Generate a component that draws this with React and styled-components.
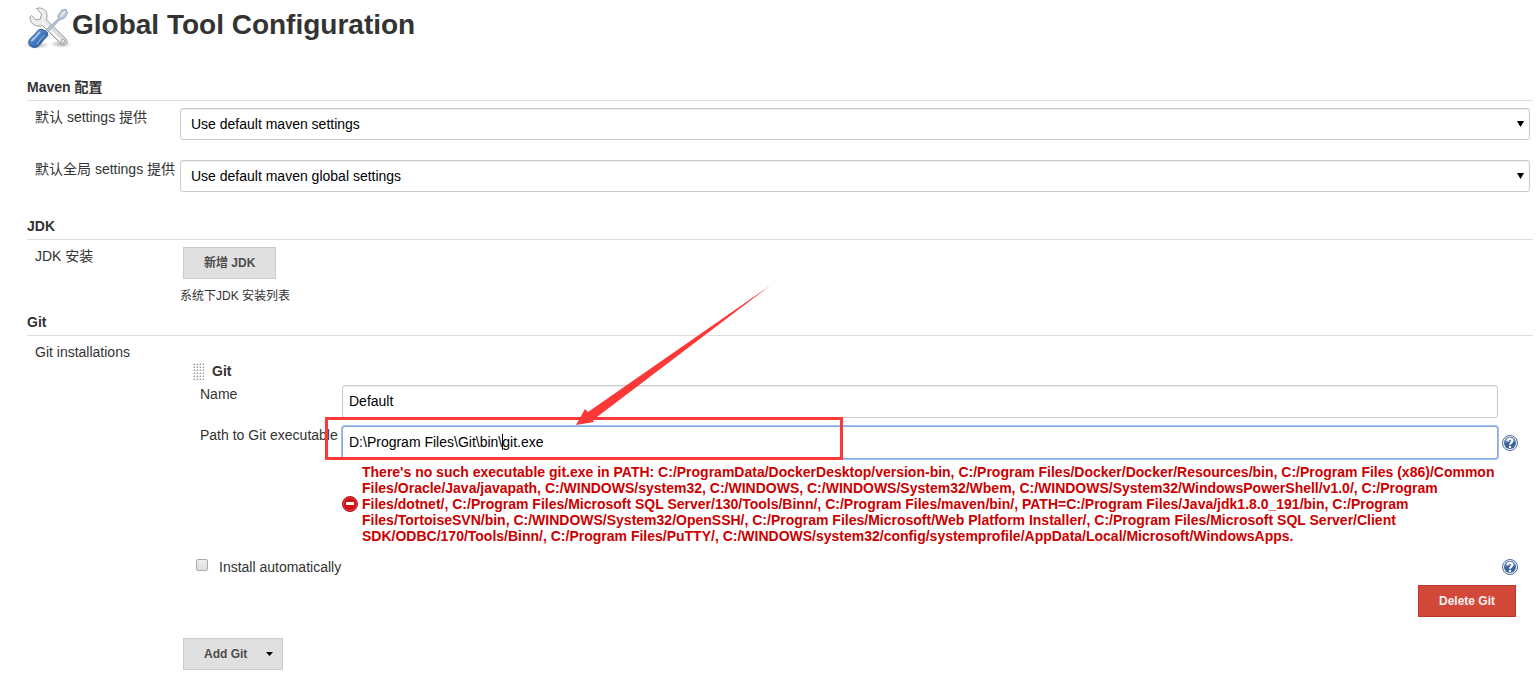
import React, { useState } from "react";
import styled, { createGlobalStyle } from "styled-components";

const GlobalStyle = createGlobalStyle`
    * {
        box-sizing: border-box;
    }

    body {
        margin: 0;
        background-color: white;
        color: #333;
        font-family: "Liberation Sans", "Noto Sans CJK SC", sans-serif;
        font-size: 14px;
        line-height: 18px;
    }

    input, select, button {
        font-family: inherit;
    }
`;

const Page = styled.main`
    padding: 0 3px 4px 24px;
`;

const Header = styled.header`
    display: flex;
    align-items: flex-start;
    padding-top: 4px;
    height: 73px;

    h1 {
        margin: 0;
        font-size: 28px;
        line-height: 42px;
    }

    svg {
        width: 48px;
        height: 48px;
        flex: none;
    }
`;

const Section = styled.section`
    margin-left: 3px;

    h2 {
        margin: 0;
        padding: 5px 0 4px;
        border-bottom: 1px solid #ddd;
        font-size: 14px;
        line-height: 18px;
    }
`;

const Row = styled.div`
    display: grid;
    grid-template-columns: 153px 1fr;
    padding-bottom: ${props => props.$space}px;
`;

const RowLabel = styled.label`
    padding: 7px 0 0 8px;
    white-space: nowrap;
`;

const RowBody = styled.div`
    padding: 7px 3px 0 0;
    min-width: 0;
`;

const SelectBox = styled.div`
    position: relative;

    select {
        display: block;
        width: 100%;
        height: 32px;
        padding: 0 24px 0 10px;
        appearance: none;
        border: 1px solid #ccc;
        border-radius: 3px;
        background-color: white;
        box-shadow: inset 0 1px 1px rgba(0, 0, 0, 0.08);
        color: black;
        font-size: 14px;
    }

    svg {
        position: absolute;
        right: 6px;
        top: 13px;
        pointer-events: none;
    }
`;

const Button = styled.button`
    display: inline-flex;
    align-items: center;
    height: 32px;
    margin: 0 3px;
    padding: 0 ${props => props.$menu ? 9 : 20}px 0 20px;
    gap: 19px;
    border: 1px solid ${props => props.$danger ? '#b8392b' : '#ccc'};
    background-color: ${props => props.$danger ? '#d24939' : '#e0e0e0'};
    color: ${props => props.$danger ? '#f2f2f2' : '#4d4d4d'};
    font-size: 12px;
    font-weight: bold;
    line-height: 14px;
    cursor: pointer;
`;

const Note = styled.div`
    padding: 8px 0 3px;
    font-size: 12px;
`;

const Installation = styled.div`
    padding: 19px 12px 21px 13px;
`;

const InstallHead = styled.div`
    display: flex;
    align-items: center;
    gap: 8px;
    height: 18px;
    font-weight: bold;
`;

const Field = styled.div`
    display: grid;
    grid-template-columns: 149px 1fr 20px;
    padding-bottom: 8px;

    label {
        padding-left: 7px;
        white-space: nowrap;
    }
`;

const Fields = styled.div`
    padding-top: 5px;
`;

const Control = styled.div`
    position: relative;
    min-width: 0;

    input {
        display: block;
        width: 100%;
        height: 33px;
        padding: 0 6px 2px;
        border: 1px solid #ccc;
        border-radius: 3px;
        background-color: white;
        box-shadow: inset 0 1px 1px rgba(0, 0, 0, 0.08);
        color: black;
        font-size: 14px;
        outline: none;
    }

    input.active {
        border-color: #86a9e8;
        box-shadow: 0 0 0 1px #a4c0f0;
    }
`;

const Caret = styled.span`
    position: absolute;
    left: 160px;
    top: 8px;
    width: 1px;
    height: 16px;
    background-color: black;
`;

const Highlight = styled.div`
    position: absolute;
    left: -17px;
    top: -9px;
    width: 518px;
    height: 43px;
    border: 3px solid #fd3838;
    pointer-events: none;
`;

const Arrow = styled.svg`
    position: absolute;
    left: 234px;
    top: -142px;
    pointer-events: none;
`;

const HelpButton = styled.button`
    display: flex;
    align-self: center;
    margin-left: 4px;
    padding: 0;
    border: none;
    background: none;
    cursor: pointer;
`;

const ErrorMessage = styled.div`
    display: flex;
    align-items: center;
    gap: 4px;
    margin: -3px 0 0 149px;
    color: #c00;
    font-weight: bold;
    line-height: 16px;

    svg {
        flex: none;
    }
`;

const CheckRow = styled.div`
    display: flex;
    align-items: center;
    justify-content: space-between;
    margin-top: 14px;
    padding-left: 3px;

    label {
        display: flex;
        align-items: center;
        gap: 11px;
    }

    input {
        appearance: none;
        width: 12px;
        height: 12px;
        margin: 0 0 4px;
        border: 1px solid #aaa;
        border-radius: 2px;
        background-image: linear-gradient(#eee, #ddd);
    }
`;

const Actions = styled.div`
    display: flex;
    justify-content: flex-end;
    margin-top: 9px;
    margin-right: -1px;
`;

const ToolsIcon = () => (
    <svg viewBox="0 0 48 48" aria-hidden="true">
        <defs>
            <linearGradient id="steel" x1="0" y1="0" x2="1" y2="1">
                <stop offset="0" stopColor="#f7f7f6" />
                <stop offset="1" stopColor="#d3d5d2" />
            </linearGradient>
            <linearGradient id="handle" x1="0" y1="0" x2="1" y2="1">
                <stop offset="0" stopColor="#8db2e3" />
                <stop offset="0.5" stopColor="#4277bd" />
                <stop offset="1" stopColor="#204a87" />
            </linearGradient>
            <radialGradient id="shade">
                <stop offset="0" stopColor="#000" stopOpacity="0.3" />
                <stop offset="1" stopColor="#000" stopOpacity="0" />
            </radialGradient>
        </defs>
        <ellipse cx="13" cy="41" rx="13" ry="4" fill="url(#shade)" />
        <ellipse cx="37" cy="40" rx="11" ry="4" fill="url(#shade)" />
        <path
            d="M12.500 4.500 C18 2.500 23.500 6.500 23 12.500 L22.500 16 L42 35 C44.500 38 41.500 42.500 37.500 40.500 L18.500 21.500 C12.500 24 5.500 19.500 6 13 L7.500 11.500 L12 16 L16.500 15 L17.500 10 Z"
            fill="url(#steel)" stroke="#9b9d99" strokeLinejoin="round"
        />
        <path d="M18 18 L37 37" stroke="#fff" strokeWidth="1.500" />
        <circle cx="38.800" cy="37.300" r="1.800" fill="#eee" stroke="#8f918d" strokeWidth="0.800" />
        <path
            d="M21 27 L34.500 14.500 L34 11.500 L38 6 L42 5.500 L43.500 9 L41 13.500 L37 15.500 L35.500 16 L23 29 Z"
            fill="#bccadb" stroke="#8d9aad" strokeWidth="0.900" strokeLinejoin="round"
        />
        <path d="M36.500 12.500 L41 7.500" stroke="#dfe7ef" strokeWidth="2" />
        <path
            d="M14.500 26 C17 23.500 25.500 28 23.500 32 C20 35 18 38 15.500 41 C12.500 45.500 3 43.500 5 36.500 C6.500 33.500 11 30.500 14.500 26 Z"
            fill="url(#handle)" stroke="#2c5896"
        />
        <path d="M15.500 28.500 Q12 33 8 36.500" fill="none" stroke="#a8c6ee" strokeWidth="2" strokeLinecap="round" />
        <path d="M20 31.500 Q16 35.500 13 40" fill="none" stroke="#7ba3da" strokeWidth="1.500" strokeLinecap="round" />
    </svg>
)

const HelpIcon = () => (
    <svg width="16" height="16" viewBox="0 0 16 16" aria-hidden="true">
        <circle cx="8" cy="8" r="7.500" fill="#fff" stroke="#45699f" />
        <circle cx="8" cy="8" r="6" fill="#3a629c" />
        <path d="M2.300 8 A5.700 5.700 0 0 1 13.700 7 Q8 6 2.300 8 Z" fill="#6c8bb9" />
        <path d="M5.500 6.300 C5.500 3 10.500 3.200 10.400 6 C10.300 7.700 8 7.600 8 9.800" fill="none" stroke="#fff" strokeWidth="2" />
        <circle cx="8" cy="11.900" r="1.200" fill="#fff" />
    </svg>
)

const ErrorIcon = () => (
    <svg width="16" height="16" viewBox="0 0 16 16" aria-hidden="true">
        <circle cx="8" cy="8" r="7.500" fill="#d40f14" stroke="#b0141a" />
        <circle cx="8" cy="8" r="6.500" fill="none" stroke="#e8575a" strokeWidth="0.700" />
        <rect x="4" y="6" width="8" height="3" fill="#fff" />
    </svg>
)

const DragHandle = () => (
    <svg width="11" height="17" aria-hidden="true">
        <defs>
            <pattern id="dots" width="3" height="3" patternUnits="userSpaceOnUse">
                <path d="M1 0h1v1h-1z M0 1h1v1h-1z" fill="#ccc" />
                <path d="M1 1h1v1h-1z" fill="#999" />
            </pattern>
        </defs>
        <rect width="11" height="17" fill="url(#dots)" />
    </svg>
)

const Triangle = ({ height = 6 }) => (
    <svg width="7" height={height} viewBox="0 0 7 6" preserveAspectRatio="none" aria-hidden="true">
        <path d="M0 0H7L3.500 6Z" fill="#000" />
    </svg>
)

const Select = ({ id, option }) => (
    <SelectBox>
        <select id={id}>
            <option>{option}</option>
        </select>
        <Triangle />
    </SelectBox>
)

const Help = () => (
    <HelpButton type="button" aria-label="Help">
        <HelpIcon />
    </HelpButton>
)

export default () => {
    const [name, setName] = useState('Default')
    const [path, setPath] = useState('D:\\Program Files\\Git\\bin\\git.exe')
    const [auto, setAuto] = useState(false)

    return (
        <Page>
            <GlobalStyle />
            <Header>
                <ToolsIcon />
                <h1>Global Tool Configuration</h1>
            </Header>

            <Section>
                <h2>Maven 配置</h2>
                <Row $space={13}>
                    <RowLabel htmlFor="settings">默认 settings 提供</RowLabel>
                    <RowBody><Select id="settings" option="Use default maven settings" /></RowBody>
                </Row>
                <Row $space={20}>
                    <RowLabel htmlFor="global-settings">默认全局 settings 提供</RowLabel>
                    <RowBody><Select id="global-settings" option="Use default maven global settings" /></RowBody>
                </Row>
            </Section>

            <Section>
                <h2>JDK</h2>
                <Row $space={0}>
                    <RowLabel as="div">JDK 安装</RowLabel>
                    <RowBody>
                        <Button type="button">新增 JDK</Button>
                        <Note>系统下JDK 安装列表</Note>
                    </RowBody>
                </Row>
            </Section>

            <Section>
                <h2>Git</h2>
                <Row $space={0}>
                    <RowLabel as="div">Git installations</RowLabel>
                    <RowBody>
                        <Installation>
                            <InstallHead>
                                <DragHandle />
                                Git
                            </InstallHead>
                            <Fields>
                                <Field>
                                    <label htmlFor="git-name">Name</label>
                                    <Control>
                                        <input id="git-name" type="text" value={name} onChange={e => setName(e.target.value)} />
                                    </Control>
                                </Field>
                                <Field>
                                    <label htmlFor="git-path">Path to Git executable</label>
                                    <Control>
                                        <input id="git-path" className="active" type="text" value={path} onChange={e => setPath(e.target.value)} />
                                        <Caret />
                                        <Highlight />
                                        <Arrow width="198" height="143" viewBox="0 0 198 143" aria-hidden="true">
                                            <path d="M0 141 L9 125 L12 128 L195 1 L17 136 L18 138 Z" fill="#fd3838" />
                                        </Arrow>
                                    </Control>
                                    <Help />
                                </Field>
                            </Fields>
                            <ErrorMessage>
                                <ErrorIcon />
                                <span>
                                    There's no such executable git.exe in PATH: C:/ProgramData/DockerDesktop/version-bin, C:/Program Files/Docker/Docker/Resources/bin, C:/Program Files (x86)/Common Files/Oracle/Java/javapath, C:/WINDOWS/system32, C:/WINDOWS, C:/WINDOWS/System32/Wbem, C:/WINDOWS/System32/WindowsPowerShell/v1.0/, C:/Program Files/dotnet/, C:/Program Files/Microsoft SQL Server/130/Tools/Binn/, C:/Program Files/maven/bin/, PATH=C:/Program Files/Java/jdk1.8.0_191/bin, C:/Program Files/TortoiseSVN/bin, C:/WINDOWS/System32/OpenSSH/, C:/Program Files/Microsoft/Web Platform Installer/, C:/Program Files/Microsoft SQL Server/Client SDK/ODBC/170/Tools/Binn/, C:/Program Files/PuTTY/, C:/WINDOWS/system32/config/systemprofile/AppData/Local/Microsoft/WindowsApps.
                                </span>
                            </ErrorMessage>
                            <CheckRow>
                                <label>
                                    <input type="checkbox" checked={auto} onChange={e => setAuto(e.target.checked)} />
                                    Install automatically
                                </label>
                                <Help />
                            </CheckRow>
                            <Actions>
                                <Button type="button" $danger>Delete Git</Button>
                            </Actions>
                        </Installation>
                        <Button type="button" $menu>
                            Add Git
                            <Triangle height={4} />
                        </Button>
                    </RowBody>
                </Row>
            </Section>
        </Page>
    )
}
